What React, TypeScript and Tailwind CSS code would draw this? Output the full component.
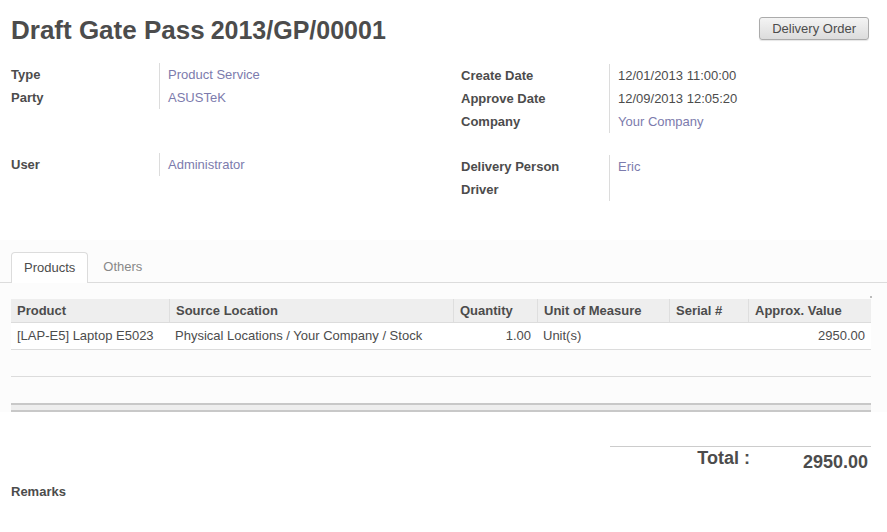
import type { ReactNode } from 'react'

type Row = { label: string; value?: string; link?: boolean }

const LEFT_TOP: Row[] = [
  { label: 'Type', value: 'Product Service', link: true },
  { label: 'Party', value: 'ASUSTeK', link: true },
]
const LEFT_BOTTOM: Row[] = [{ label: 'User', value: 'Administrator', link: true }]
const RIGHT_TOP: Row[] = [
  { label: 'Create Date', value: '12/01/2013 11:00:00' },
  { label: 'Approve Date', value: '12/09/2013 12:05:20' },
  { label: 'Company', value: 'Your Company', link: true },
]
const RIGHT_BOTTOM: Row[] = [
  { label: 'Delivery Person', value: 'Eric', link: true },
  { label: 'Driver' },
]

const COLUMNS = [
  { name: 'Product', w: 'w-[158px]' },
  { name: 'Source Location', w: 'w-[284px]' },
  { name: 'Quantity', w: 'w-[84px]' },
  { name: 'Unit of Measure', w: 'w-[132px]' },
  { name: 'Serial #', w: 'w-[79px]' },
  { name: 'Approx. Value', w: 'flex-1' },
]

function FieldGroup({ rows }: { rows: Row[] }) {
  return (
    <div className="flex">
      <div className="w-[148px] shrink-0">
        {rows.map(r => (
          <div key={r.label} className="h-[23px] flex items-center font-bold">{r.label}</div>
        ))}
      </div>
      <div className="border-l border-[#dcdcdc] pl-2 flex-1">
        {rows.map(r => (
          <div key={r.label} className={`h-[23px] flex items-center ${r.link ? 'text-[#7c7bad]' : ''}`}>
            {r.value ?? ''}
          </div>
        ))}
      </div>
    </div>
  )
}

function Cell({ children, w, right, head }: { children?: ReactNode; w: string; right?: boolean; head?: boolean }) {
  return (
    <div
      className={`${w} px-[6px] flex items-center ${right ? 'justify-end' : ''} ${
        head ? 'font-bold border-l border-[#dedede] first:border-l-0' : ''
      }`}
    >
      {children}
    </div>
  )
}

export default function App() {
  return (
    <div className="w-[887px] h-[532px] bg-white text-[13px] text-[#4c4c4c] font-['Liberation_Sans',Arial,sans-serif] overflow-hidden">
      {/* Header */}
      <div className="flex items-start justify-between pl-[11px] pr-[18px] pt-[14px]">
        <h1 className="font-bold leading-[32px] flex items-baseline gap-[6px]">
          <span className="text-[26px]">Draft Gate Pass</span>
          <span className="text-[25px]">2013/GP/00001</span>
        </h1>
        <button className="mt-[3px] h-[23px] px-[12px] rounded-[3px] border border-[#ababab] bg-gradient-to-b from-[#f4f4f4] to-[#dcdcdc] text-[#4c4c4c] text-[13px] shadow-[0_1px_1px_rgba(0,0,0,0.1)]">
          Delivery Order
        </button>
      </div>

      {/* Fields */}
      <div className="flex px-[11px] mt-[16px]">
        <div className="w-[450px] pt-[1px]">
          <FieldGroup rows={LEFT_TOP} />
          <div className="h-[44px]" />
          <FieldGroup rows={LEFT_BOTTOM} />
        </div>
        <div className="flex-1 pt-[2px]">
          <FieldGroup rows={RIGHT_TOP} />
          <div className="h-[22px]" />
          <FieldGroup rows={RIGHT_BOTTOM} />
        </div>
      </div>

      {/* Notebook */}
      <div className="mt-[39px] bg-[#fcfcfc] pt-[12px]">
        <div className="flex items-end border-b border-[#dcdcdc] pl-[11px] h-[31px]">
          <div className="h-[31px] px-[12px] flex items-center border border-b-0 border-[#dcdcdc] rounded-t-[4px] bg-white -mb-px">
            Products
          </div>
          <div className="h-[31px] px-[15px] flex items-center text-[#888]">Others</div>
        </div>

        <div className="relative px-[11px] pr-[16px] pt-[16px]">
          <span className="absolute right-[15px] top-[13px] w-[2px] h-[2px] bg-[#bbb]" />
          <div className="flex h-[24px] bg-[#eeeeee] border-b border-[#dcdcdc]">
            {COLUMNS.map(c => (
              <Cell key={c.name} w={c.w} head>
                {c.name}
              </Cell>
            ))}
          </div>
          <div className="flex h-[27px] border-b border-[#dcdcdc] bg-white">
            <Cell w={COLUMNS[0].w}>[LAP-E5] Laptop E5023</Cell>
            <Cell w={COLUMNS[1].w}>Physical Locations / Your Company / Stock</Cell>
            <Cell w={COLUMNS[2].w} right>1.00</Cell>
            <Cell w={COLUMNS[3].w}>Unit(s)</Cell>
            <Cell w={COLUMNS[4].w} />
            <Cell w={COLUMNS[5].w} right>2950.00</Cell>
          </div>
          <div className="h-[27px] border-b border-[#dcdcdc]" />
          <div className="h-[26px]" />
          <div className="h-[9px] bg-[#eeeeee] border-t-2 border-b-2 border-[#c8c8c8]" />
        </div>
      </div>

      {/* Total */}
      <div className="px-[11px] pr-[16px] pt-[34px] bg-white">
        <div className="ml-auto w-[261px] border-t border-[#cccccc] flex items-start">
          <div className="w-[140px] text-right font-bold text-[18px] leading-[20px] pt-[1px]">Total :</div>
          <div className="flex-1 text-right font-bold text-[18px] leading-[20px] pt-[5px] pr-[3px]">2950.00</div>
        </div>
        <div className="font-bold mt-[10px]">Remarks</div>
      </div>
    </div>
  )
}
